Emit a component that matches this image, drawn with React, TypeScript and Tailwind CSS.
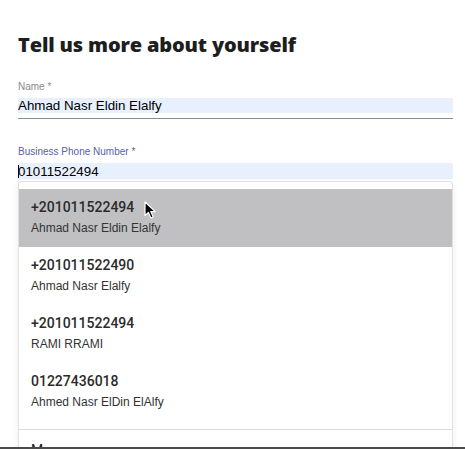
import React from 'react';

const contacts = [
  { phone: '+201011522494', name: 'Ahmad Nasr Eldin Elalfy', active: true },
  { phone: '+201011522490', name: 'Ahmad Nasr Elalfy', active: false },
  { phone: '+201011522494', name: 'RAMI RRAMI', active: false },
  { phone: '01227436018', name: 'Ahmed Nasr ElDin ElAlfy', active: false },
];

// mouse pointer hovering the first suggestion
const Cursor = () => (
  <svg width="14" height="19" viewBox="0 0 14 19" className="absolute left-[125px] top-[12px]">
    <path
      d="M1 1 L1 14.5 L4.4 11.4 L6.9 17 L9.2 16 L6.8 10.6 L11.3 10.6 Z"
      fill="#000"
      stroke="#fff"
      strokeWidth="1.2"
      strokeLinejoin="round"
    />
  </svg>
);

const App = () => {
  return (
    <div className="flex h-[449px] w-[465px] flex-col overflow-hidden bg-white">
      <div className="flex-1 overflow-hidden pl-[18px] pt-[31px]">
        <div className="w-[435px]">
          {/* title */}
          <h1 className="font-['Open_Sans',sans-serif] text-[20px] font-extrabold leading-[28px] tracking-[-0.15px] text-[#1e1e1e]">
            Tell us more about yourself
          </h1>

          {/* name field */}
          <div className="mt-[21px] font-['Liberation_Sans',Arial,sans-serif]">
            <div className="text-[10px] leading-[14px] text-[#8a8a8a]">Name *</div>
            <div className="mt-[4px] h-[15px] bg-[#e8f0fe] text-[13.33px] leading-[15px] text-black">
              Ahmad Nasr Eldin Elalfy
            </div>
            <div className="h-[6px] border-b border-[#8c8c8c]" />
          </div>

          {/* phone field */}
          <div className="mt-[26px] font-['Liberation_Sans',Arial,sans-serif]">
            <div className="text-[10px] leading-[14px] text-[#5a60b0]">Business Phone Number *</div>
            <div className="mt-[4px] flex h-[16px] items-center bg-[#e8f0fe] text-[13.33px] leading-[16px] text-black">
              <span className="h-[13px] w-px bg-black" />
              <span className="-ml-px pt-px">01011522494</span>
            </div>

            {/* suggestions dropdown */}
            <div className="mt-[2px] rounded-t-[4px] border border-b-0 border-[#e2e2e2] pt-[7px] shadow-[0_2px_6px_rgba(0,0,0,0.08)]">
              {contacts.map((c, i) => (
                <div
                  key={i}
                  className={`relative pb-[11px] pl-[12px] pt-[8px] ${c.active ? 'bg-[#c0c0c2]' : 'bg-white'}`}
                >
                  <div className="font-['Roboto',sans-serif] text-[14px] font-medium leading-5 text-[#2b2b2b]">
                    {c.phone}
                  </div>
                  <div className="mt-[3px] text-[12px] leading-4 text-[#333]">{c.name}</div>
                  {c.active && <Cursor />}
                </div>
              ))}
              <div className="mt-[8px] border-t border-[#dcdcdc] pl-[12px] pt-[10px] font-['Roboto',sans-serif] text-[14px] leading-5 text-[#222]">
                Manage
              </div>
            </div>
          </div>
        </div>
      </div>
      <div className="h-[2px] shrink-0 bg-[#4a4a4a]" />
    </div>
  );
};

export default App;
